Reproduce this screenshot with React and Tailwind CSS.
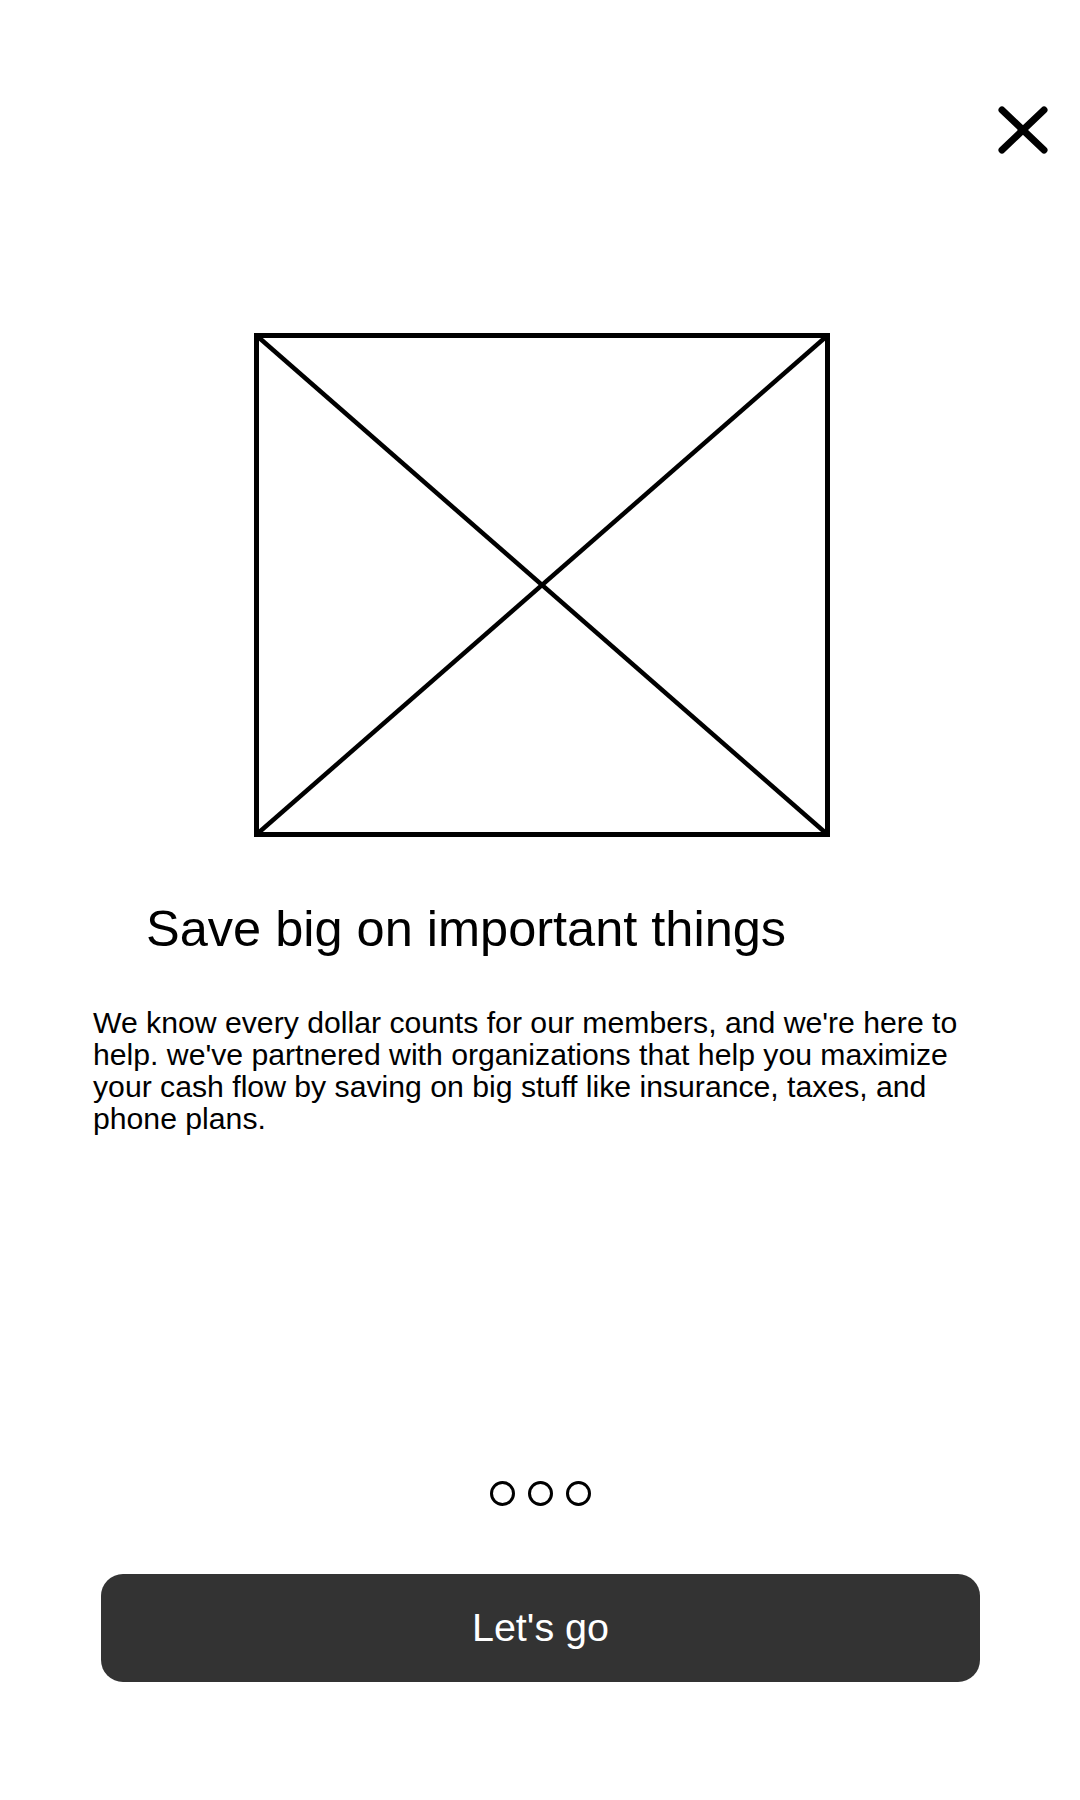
export default function App() {
  return (
    <div
      className="w-[1080px] h-[1800px] bg-white flex flex-col text-black"
      style={{ fontFamily: '"Liberation Sans", Arial, sans-serif' }}
    >
      <div className="flex justify-end pt-[104px] pr-[30px]">
        <svg width="54" height="52" viewBox="0 0 54 52">
          <line x1="6" y1="6" x2="48" y2="46" stroke="#000" strokeWidth="7" strokeLinecap="round" />
          <line x1="48" y1="6" x2="6" y2="46" stroke="#000" strokeWidth="7" strokeLinecap="round" />
        </svg>
      </div>
      <div className="ml-[254px] mt-[177px]">
        <svg width="576" height="504" viewBox="0 0 576 504">
          <rect x="2.5" y="2.5" width="571" height="499" fill="none" stroke="#000" strokeWidth="5" />
          <line x1="2.5" y1="2.5" x2="573.5" y2="501.5" stroke="#000" strokeWidth="4.5" />
          <line x1="573.5" y1="2.5" x2="2.5" y2="501.5" stroke="#000" strokeWidth="4.5" />
        </svg>
      </div>
      <h1 className="ml-[146px] mt-[64px] text-[50.5px] leading-[56px] font-normal">
        Save big on important things
      </h1>
      <p className="ml-[93px] mt-[50px] w-[880px] text-[30.2px] leading-[32px]">
        We know every dollar counts for our members, and we're here to help. we've partnered with
        organizations that help you maximize your cash flow by saving on big stuff like insurance,
        taxes, and phone plans.
      </p>
      <div className="mt-[346px] flex justify-center gap-[13px]">
        <span className="w-[25px] h-[25px] rounded-full border-[3px] border-black"></span>
        <span className="w-[25px] h-[25px] rounded-full border-[3px] border-black"></span>
        <span className="w-[25px] h-[25px] rounded-full border-[3px] border-black"></span>
      </div>
      <button className="ml-[101px] mt-[68px] w-[879px] h-[108px] rounded-[22px] bg-[#333333] text-white text-[39.5px] flex items-center justify-center">
        Let's go
      </button>
    </div>
  );
}
